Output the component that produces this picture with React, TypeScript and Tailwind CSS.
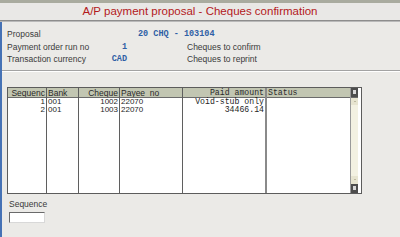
import React from "react";

type Col = {
  title: string;
  width: string;
  align: "left" | "right";
  mono?: boolean;
  sep: string;
  cells: string[];
};

const columns: Col[] = [
  { title: "Sequenc", width: "w-[39px]", align: "right", sep: "border-r border-[#5f5f5f]", cells: ["1", "2"] },
  { title: "Bank", width: "w-[32px]", align: "left", sep: "border-r border-[#5f5f5f]", cells: ["001", "001"] },
  { title: "Cheque", width: "w-[41px]", align: "right", sep: "border-r border-[#5f5f5f]", cells: ["1002", "1003"] },
  { title: "Payee\u00a0 no", width: "w-[63px]", align: "left", sep: "border-r border-[#5f5f5f]", cells: ["22070", "22070"] },
  { title: "Paid amount", width: "w-[84px]", align: "right", mono: true, sep: "border-r-2 border-[#8a8a8a]", cells: ["Void-stub only", "34466.14"] },
  { title: "Status", width: "w-[83px]", align: "left", mono: true, sep: "", cells: ["", ""] },
];

function Field({ label, value, valueClass, note }: { label: string; value: string; valueClass: string; note?: string }) {
  return (
    <div className="flex h-[12.5px] items-center text-[8.5px] text-[#3a3a3a]">
      <span className="w-[100px] shrink-0">{label}</span>
      <span className={`font-['Liberation_Mono'] font-bold text-[8.5px] text-[#2f5fa5] whitespace-pre ${valueClass}`}>{value}</span>
      {note && <span className="ml-[60px]">{note}</span>}
    </div>
  );
}

export default function App() {
  return (
    <div className="w-[400px] h-[237px] bg-[#ebeae7] flex flex-col overflow-hidden font-['Liberation_Sans',sans-serif]">
      {/* title bar */}
      <div className="h-[3px] bg-[#a9ab9f]" />
      <div className="h-[17px] flex items-center justify-center text-[11.5px] text-[#b3191c] bg-[#e9e8e6]">
        A/P payment proposal - Cheques confirmation
      </div>
      <div className="h-[2px] bg-[#8d8d8d] border-b border-[#b9b9b9]" />

      <div className="flex-1 flex flex-col border-l-2 border-[#4672b5] pl-[5px]">
        {/* header fields */}
        <div className="pt-[6.5px] flex flex-col">
          <Field label="Proposal" value="20 CHQ - 103104" valueClass="ml-[31px]" />
          <Field label="Payment order run no" value="1" valueClass="w-[20px] text-right" note="Cheques to confirm" />
          <Field label="Transaction currency" value="CAD" valueClass="w-[20px] text-right" note="Cheques to reprint" />
        </div>
        <div className="mt-[3.5px] -ml-[5px] h-[2px] border-t border-[#a3a3a3] border-b border-b-white" />

        {/* grid */}
        <div className="mt-[15px] w-[355px] h-[107px] border border-[#5c5c5c] flex bg-white">
          {columns.map((c) => (
            <div key={c.title} className={`${c.width} shrink-0 flex flex-col ${c.sep}`}>
              <div
                className={`h-[10px] leading-[10px] bg-[#c2c6b2] border-b border-[#6b6b6b] px-[1px] text-[#2a2a2a] whitespace-pre overflow-hidden ${
                  c.align === "right" ? "text-right" : "text-left"
                } ${c.mono ? "font-['Liberation_Mono'] text-[8.2px]" : "text-[8.5px]"}`}
              >
                {c.title}
              </div>
              {c.cells.map((v, i) => (
                <div
                  key={i}
                  className={`h-[8.5px] leading-[8.5px] px-[1px] text-[#1e1e1e] whitespace-pre ${
                    c.align === "right" ? "text-right" : "text-left"
                  } ${c.mono ? "font-['Liberation_Mono'] text-[8.2px]" : "text-[8px]"}`}
                >
                  {v}
                </div>
              ))}
            </div>
          ))}
          {/* scrollbar */}
          <div className="w-[8px] shrink-0 flex flex-col bg-[#f3f1e2] border-l border-[#9a9a9a]">
            <div className="h-[10px] bg-[#4d4d4d] flex items-center justify-center border-b border-[#6b6b6b]">
              <div className="w-[3px] h-[4px] bg-[#d8d8d8]" />
            </div>
            <div className="h-[7px] bg-[#e7e4d0] flex items-center justify-center">
              <div className="w-[2px] h-[1px] bg-[#bdb9a0]" />
            </div>
            <div className="flex-1" />
            <div className="h-[8px] bg-[#e7e4d0] flex items-center justify-center">
              <div className="w-[2px] h-[1px] bg-[#bdb9a0]" />
            </div>
            <div className="h-[9px] bg-[#4d4d4d] flex items-center justify-center">
              <div className="w-[3px] h-[4px] bg-[#d8d8d8]" />
            </div>
          </div>
        </div>

        {/* sequence input */}
        <div className="mt-[5px] ml-[2px] text-[8.5px] text-[#3a3a3a] leading-[10px]">Sequence</div>
        <div className="mt-[3px] ml-[2px] w-[36px] h-[11px] bg-white border-t border-l border-[#6a6a6a] border-b border-r border-b-[#d8d8d8] border-r-[#d8d8d8]" />
      </div>
    </div>
  );
}
